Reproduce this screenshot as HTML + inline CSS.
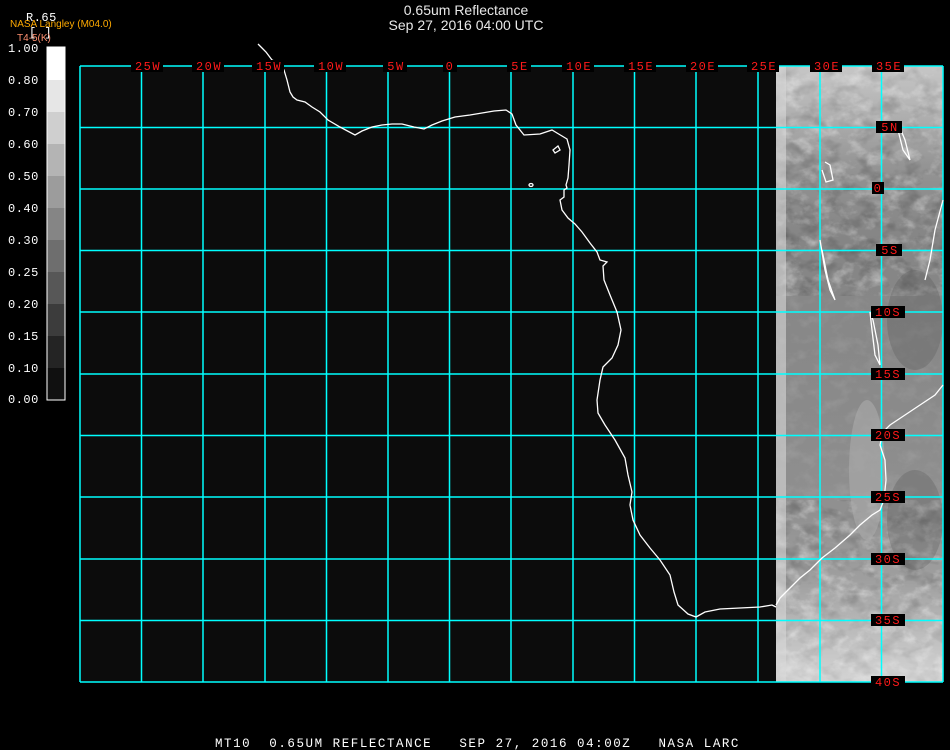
<!DOCTYPE html>
<html><head><meta charset="utf-8"><style>
html,body{margin:0;padding:0;background:#000;width:950px;height:750px;overflow:hidden}
svg{display:block}
</style></head><body>
<svg width="950" height="750" viewBox="0 0 950 750" xmlns="http://www.w3.org/2000/svg">
<defs>
<filter id="n" x="0" y="0" width="100%" height="100%">
<feTurbulence type="fractalNoise" baseFrequency="0.06 0.08" numOctaves="4" seed="7"/>
<feColorMatrix type="matrix" values="0 0 0 0 1  0 0 0 0 1  0 0 0 0 1  1.6 0 0 0 -0.75"/>
</filter>
<filter id="d" x="0" y="0" width="100%" height="100%">
<feTurbulence type="fractalNoise" baseFrequency="0.05 0.07" numOctaves="3" seed="21"/>
<feColorMatrix type="matrix" values="0 0 0 0 0  0 0 0 0 0  0 0 0 0 0  1.6 0 0 0 -0.75"/>
</filter>
<linearGradient id="g" x1="0" y1="0" x2="0" y2="1">
<stop offset="0" stop-color="#a8a8a8"/>
<stop offset="0.28" stop-color="#858585"/>
<stop offset="0.55" stop-color="#8a8a8a"/>
<stop offset="0.72" stop-color="#909090"/>
<stop offset="1" stop-color="#b4b4b4"/>
</linearGradient>
<linearGradient id="top" x1="0" y1="0" x2="0" y2="1">
<stop offset="0" stop-color="#fff" stop-opacity="0.7"/>
<stop offset="1" stop-color="#fff" stop-opacity="0"/>
</linearGradient>
<linearGradient id="bot" x1="0" y1="0" x2="0" y2="1">
<stop offset="0" stop-color="#fff" stop-opacity="0"/>
<stop offset="1" stop-color="#fff" stop-opacity="0.7"/>
</linearGradient>
</defs>
<rect x="0" y="0" width="950" height="750" fill="#000"/>
<rect x="80" y="66" width="863" height="616" fill="#0c0c0c"/>
<!-- satellite -->
<rect x="776" y="66" width="167" height="616" fill="url(#g)"/>
<rect x="776" y="66" width="167" height="230" fill="#fff" filter="url(#n)" opacity="0.6"/>
<rect x="776" y="66" width="167" height="230" fill="#000" filter="url(#d)" opacity="0.35"/>
<rect x="776" y="500" width="167" height="182" fill="#fff" filter="url(#n)" opacity="0.65"/>
<rect x="776" y="500" width="167" height="182" fill="#000" filter="url(#d)" opacity="0.3"/>
<rect x="776" y="296" width="167" height="204" fill="#fff" filter="url(#n)" opacity="0.15"/>
<rect x="776" y="66" width="167" height="100" fill="url(#top)" opacity="0.5"/>
<rect x="776" y="580" width="167" height="102" fill="url(#bot)" opacity="0.6"/>
<rect x="776" y="66" width="10" height="616" fill="#d8d8d8" opacity="0.6"/>
<ellipse cx="867" cy="470" rx="18" ry="70" fill="#ababab" opacity="0.6"/>
<ellipse cx="915" cy="320" rx="28" ry="50" fill="#555" opacity="0.3"/>
<ellipse cx="915" cy="520" rx="28" ry="50" fill="#555" opacity="0.3"/>
<!-- grid -->
<g stroke="#00ffff" stroke-width="1.5" fill="none">
<path d="M80,66V682M141.5,66V682M203,66V682M265,66V682M326.5,66V682M388,66V682M449.5,66V682M511,66V682M573,66V682M634.5,66V682M696,66V682M758,66V682M820,66V682M881.5,66V682M943,66V682"/>
<path d="M80,66H943M80,127.5H943M80,189H943M80,250.5H943M80,312H943M80,374H943M80,435.5H943M80,497H943M80,559H943M80,620.5H943M80,682H943"/>
</g>
<!-- coastline -->
<g stroke="#fff" stroke-width="1.3" fill="none">
<polyline points="258,44 262,48 266,52 272,60 280,64 284,70 287,80 290,92 293,97 297,100 305,102 312,107 320,112 328,120 340,127 355,135 362,131 372,127 382,125 392,124 402,124 414,127 424,129 432,125 442,121 455,117 470,115 482,113 494,111 506,110 512,114 516,125 524,135 540,134 552,130 557,133 567,139 570,150 569,165 568,178 566,185 567,188 564,190 564,197 560,200 562,210 568,218 575,224 582,232 590,243 597,252 600,260 607,262 603,266 604,280 610,295 617,312 621,330 618,345 612,358 603,367 600,380 597,400 598,413 605,425 615,440 625,458 628,475 632,492 630,505 633,520 640,535 650,548 660,560 670,575 674,592 678,605 688,614 696,617 705,612 720,609 740,608 760,607 772,605 776,607"/>
<path d="M553,150 l5,-4 l2,4 l-5,3 z"/>
<ellipse cx="531" cy="185" rx="2" ry="1.5"/>
<polyline points="822,170 826,182 833,180 830,165 825,162"/>
<polyline points="898,130 903,150 910,160 905,140 900,128"/>
<polyline points="820,240 825,270 830,290 835,300 828,280 822,250"/>
<polyline points="870,312 872,330 875,355 880,365 878,345 873,320 870,312"/>
<polyline points="943,385 935,395 920,405 905,415 890,425 883,432 880,445 885,460 886,480 884,500 880,510 872,515 860,525 850,535 835,548 822,558 810,570 800,578 790,588 780,598 776,605"/>
<polyline points="943,200 935,230 930,260 925,280"/>
</g>
<!-- lon labels -->
<g font-family="Liberation Mono, monospace" font-size="12" fill="#ff1a1a" text-anchor="middle" letter-spacing="1.5">
<g fill="#000"><rect x="131" y="60" width="32" height="12"/><rect x="192" y="60" width="32" height="12"/><rect x="252" y="60" width="32" height="12"/><rect x="314" y="60" width="32" height="12"/><rect x="383" y="60" width="24" height="12"/><rect x="443" y="60" width="14" height="12"/><rect x="507" y="60" width="24" height="12"/><rect x="562" y="60" width="32" height="12"/><rect x="624" y="60" width="32" height="12"/><rect x="686" y="60" width="32" height="12"/><rect x="747" y="60" width="32" height="12"/><rect x="810" y="60" width="32" height="12"/><rect x="872" y="60" width="32" height="12"/></g>
<text x="148" y="70">25W</text><text x="209" y="70">20W</text><text x="269" y="70">15W</text><text x="331" y="70">10W</text><text x="396" y="70">5W</text><text x="450" y="70">0</text><text x="520" y="70">5E</text><text x="579" y="70">10E</text><text x="641" y="70">15E</text><text x="703" y="70">20E</text><text x="764" y="70">25E</text><text x="827" y="70">30E</text><text x="889" y="70">35E</text>
<g fill="#000"><rect x="876" y="121" width="26" height="12"/><rect x="872" y="182" width="12" height="12"/><rect x="876" y="244" width="26" height="12"/><rect x="871" y="306" width="34" height="12"/><rect x="871" y="368" width="34" height="12"/><rect x="871" y="429" width="34" height="12"/><rect x="871" y="491" width="34" height="12"/><rect x="871" y="553" width="34" height="12"/><rect x="871" y="614" width="34" height="12"/><rect x="871" y="676" width="34" height="12"/></g>
<text x="890" y="131">5N</text><text x="878" y="192">0</text><text x="890" y="254">5S</text><text x="888" y="316">10S</text><text x="888" y="378">15S</text><text x="888" y="439">20S</text><text x="888" y="501">25S</text><text x="888" y="563">30S</text><text x="888" y="624">35S</text><text x="888" y="686">40S</text>
</g>
<!-- colorbar -->
<rect x="47" y="80" width="18" height="32" fill="#e6e6e6"/>
<rect x="47" y="47" width="18" height="33" fill="#fff"/>
<rect x="47" y="112" width="18" height="32" fill="#cfcfcf"/>
<rect x="47" y="144" width="18" height="32" fill="#b4b4b4"/>
<rect x="47" y="176" width="18" height="32" fill="#9c9c9c"/>
<rect x="47" y="208" width="18" height="32" fill="#858585"/>
<rect x="47" y="240" width="18" height="32" fill="#6e6e6e"/>
<rect x="47" y="272" width="18" height="32" fill="#575757"/>
<rect x="47" y="304" width="18" height="32" fill="#3c3c3c"/>
<rect x="47" y="336" width="18" height="32" fill="#242424"/>
<rect x="47" y="368" width="18" height="32" fill="#101010"/>
<rect x="47" y="47" width="18" height="353" fill="none" stroke="#fff" stroke-width="1"/>
<g font-family="Liberation Mono, monospace" font-size="12" fill="#fff" letter-spacing="0.5">
<text x="8" y="52">1.00</text><text x="8" y="84">0.80</text><text x="8" y="116">0.70</text><text x="8" y="148">0.60</text><text x="8" y="180">0.50</text><text x="8" y="212">0.40</text><text x="8" y="244">0.30</text><text x="8" y="276">0.25</text><text x="8" y="308">0.20</text><text x="8" y="340">0.15</text><text x="8" y="372">0.10</text><text x="8" y="403">0.00</text>
<text x="26" y="21">R.65</text>
<text x="29" y="36">[  ]</text>
</g>
<text x="10" y="27" font-family="Liberation Sans, sans-serif" font-size="10" fill="#ffaa00">NASA Langley (M04.0)</text>
<text x="17" y="41" font-family="Liberation Sans, sans-serif" font-size="10" fill="#ff9070">T4-5(K)</text>
<g font-family="Liberation Sans, sans-serif" font-size="14" fill="#e8e8e8" text-anchor="middle">
<text x="466" y="15">0.65um Reflectance</text>
<text x="466" y="30">Sep 27, 2016 04:00 UTC</text>
</g>
<text x="215" y="747" font-family="Liberation Mono, monospace" font-size="12.5" fill="#fff" letter-spacing="1.55" xml:space="preserve">MT10  0.65UM REFLECTANCE   SEP 27, 2016 04:00Z   NASA LARC</text>
</svg>
</body></html>
